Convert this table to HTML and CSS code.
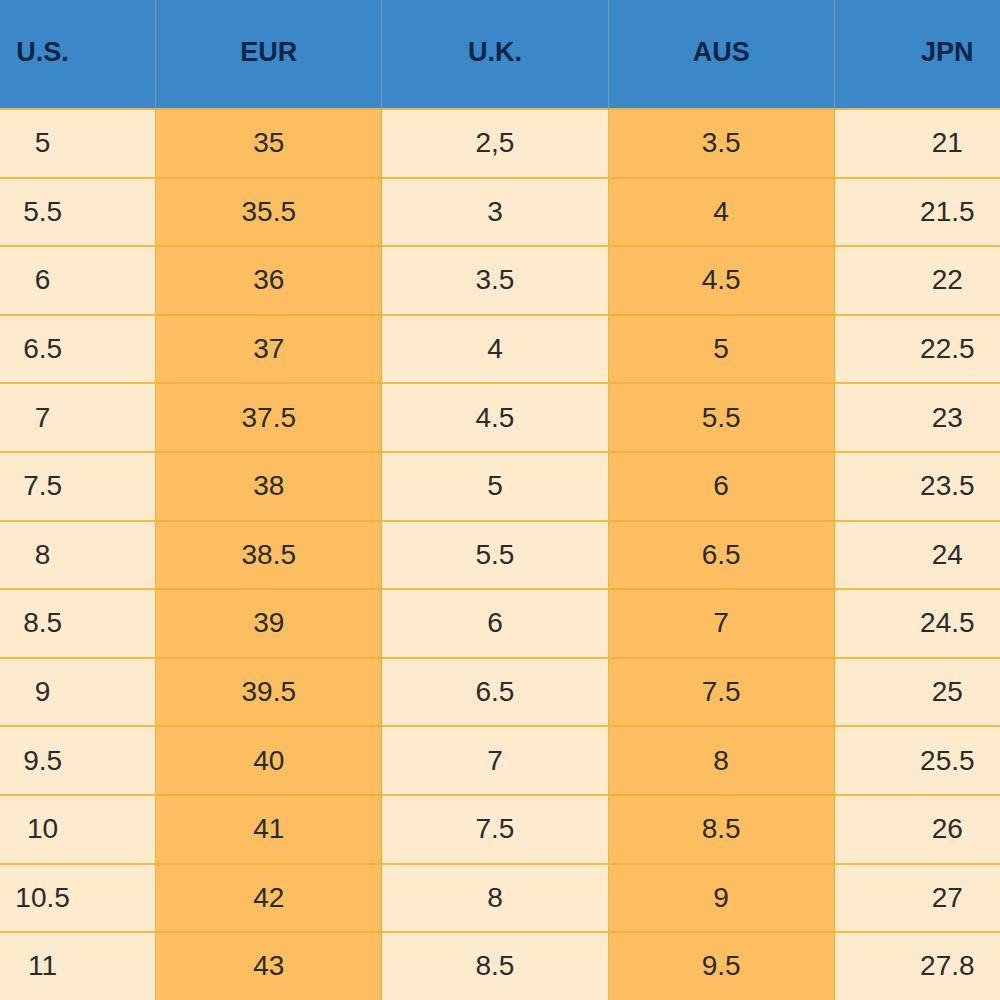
FILE: index.html
```html
<!DOCTYPE html>
<html>
<head>
<meta charset="utf-8">
<link rel="stylesheet" href="styles.css">
</head>
<body>
<div class="frame">
  <div class="chart">
    <div class="h">U.S.</div><div class="h">EUR</div><div class="h">U.K.</div><div class="h">AUS</div><div class="h">JPN</div>
    <div class="c">5</div><div class="c o">35</div><div class="c">2,5</div><div class="c o">3.5</div><div class="c">21</div>
    <div class="c">5.5</div><div class="c o">35.5</div><div class="c">3</div><div class="c o">4</div><div class="c">21.5</div>
    <div class="c">6</div><div class="c o">36</div><div class="c">3.5</div><div class="c o">4.5</div><div class="c">22</div>
    <div class="c">6.5</div><div class="c o">37</div><div class="c">4</div><div class="c o">5</div><div class="c">22.5</div>
    <div class="c">7</div><div class="c o">37.5</div><div class="c">4.5</div><div class="c o">5.5</div><div class="c">23</div>
    <div class="c">7.5</div><div class="c o">38</div><div class="c">5</div><div class="c o">6</div><div class="c">23.5</div>
    <div class="c">8</div><div class="c o">38.5</div><div class="c">5.5</div><div class="c o">6.5</div><div class="c">24</div>
    <div class="c">8.5</div><div class="c o">39</div><div class="c">6</div><div class="c o">7</div><div class="c">24.5</div>
    <div class="c">9</div><div class="c o">39.5</div><div class="c">6.5</div><div class="c o">7.5</div><div class="c">25</div>
    <div class="c">9.5</div><div class="c o">40</div><div class="c">7</div><div class="c o">8</div><div class="c">25.5</div>
    <div class="c">10</div><div class="c o">41</div><div class="c">7.5</div><div class="c o">8.5</div><div class="c">26</div>
    <div class="c">10.5</div><div class="c o">42</div><div class="c">8</div><div class="c o">9</div><div class="c">27</div>
    <div class="c">11</div><div class="c o">43</div><div class="c">8.5</div><div class="c o">9.5</div><div class="c">27.8</div>
  </div>
</div>
</body>
</html>
```
FILE: styles.css
```css
html, body {
  margin: 0;
  padding: 0;
  background: #feeacc;
}
.frame {
  width: 1000px;
  height: 1000px;
  overflow: hidden;
}
.chart {
  margin-left: -70px;
  display: grid;
  grid-template-columns: repeat(5, 226.2px);
  grid-template-rows: 110px repeat(13, 68.6px);
  font-family: "Liberation Sans", Arial, sans-serif;
}
.h {
  background: #3b87c8;
  color: #0c2645;
  font-weight: bold;
  font-size: 27px;
  display: flex;
  align-items: center;
  justify-content: center;
  padding-bottom: 3px;
  border-right: 1px solid #7f9fa8;
  border-bottom: 2px solid #e9b44a;
  box-sizing: border-box;
}
.c {
  background: #feeacc;
  color: #2b2b2b;
  font-size: 28px;
  display: flex;
  align-items: center;
  justify-content: center;
  border-right: 1px solid #f3b43c;
  border-bottom: 2px solid #f5bb45;
  box-sizing: border-box;
}
.c.o {
  background: #fdbe62;
  border-right-color: #eeaa33;
  border-bottom-color: #f3b03c;
}
```
